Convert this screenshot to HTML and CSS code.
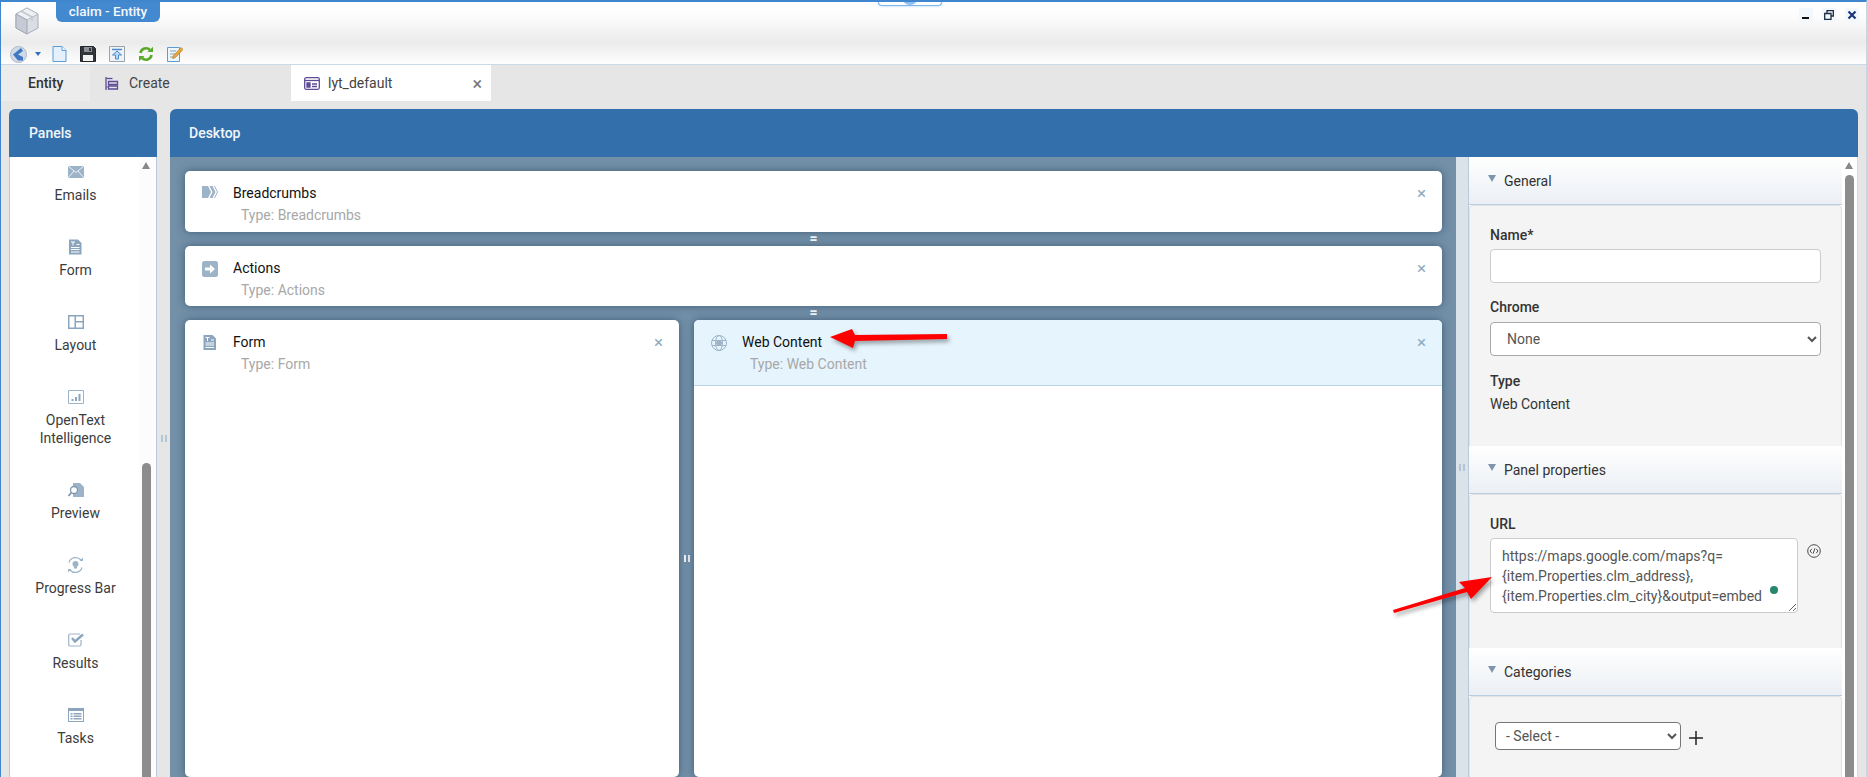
FILE: index.html

```html
<!DOCTYPE html>
<html lang="en">
<head>
  <meta charset="UTF-8" />
  <title>claim - Entity</title>
  <link rel="stylesheet" href="styles.css">
</head>
<body>

<div class="window">
  <div class="dock-tab"><span class="dock-dot"></span></div>

  <header class="titlebar">
    <div class="title-row">
      <svg class="logo" width="24" height="28" viewBox="0 0 24 28">
        <path d="M12 1 23 7v14L12 27 1 21V7z" fill="#d9dde4" stroke="#a9aeb8"/>
        <path d="M1 7l11 6 11-6-11-6z" fill="#eef0f4" stroke="#b5bac4"/>
        <path d="M12 13v14L1 21V7z" fill="#c6cad4" stroke="#a3a8b4"/>
        <path d="M6 4l11 6v4" fill="none" stroke="#c2c6ce" stroke-width="1.5"/>
      </svg>
      <div class="title-tab">claim - Entity</div>
      <div class="win-controls">
        <span class="win-btn"><svg width="10" height="10" viewBox="0 0 10 10"><path d="M1 8h7" stroke="#111" stroke-width="2"/></svg></span>
        <span class="win-btn"><svg width="10" height="10" viewBox="0 0 10 10"><path d="M3 3V.7h6.3V6H7M.7 3.5H7v6H.7z" fill="none" stroke="#1c2a44" stroke-width="1.3"/></svg></span>
        <span class="win-btn"><svg width="10" height="10" viewBox="0 0 10 10"><path d="M1.5 1.5l7 7M8.5 1.5l-7 7" stroke="#1b3578" stroke-width="2.2"/></svg></span>
      </div>
    </div>
    <div class="toolbar">
      <svg class="tool-back" width="17" height="17" viewBox="0 0 17 17">
        <circle cx="8.5" cy="8.5" r="8" fill="#cfd9e8" stroke="#aeb9ca"/>
        <path d="M11 2 3 8.5l5 6h5V11L8 8.500 13 5z" fill="#3f78c2"/>
      </svg>
      <span class="tool-caret"></span>
      <svg class="tool" width="15" height="16" viewBox="0 0 15 16"><path d="M1 .5h9L14 4.500V15.500H1z" fill="#e4f0fb" stroke="#5b9bd8"/><path d="M10 .5v4h4" fill="#fff" stroke="#5b9bd8"/></svg>
      <svg class="tool" width="16" height="16" viewBox="0 0 16 16"><path d="M.5.5h13l2 2v13H.5z" fill="#33363b" stroke="#22252a"/><path d="M4 1h8v5H4z" fill="#8d9096"/><path d="M9 2h2v3H9z" fill="#33363b"/><path d="M3 9h10v6H3z" fill="#f2f2f2"/></svg>
      <svg class="tool" width="16" height="16" viewBox="0 0 16 16"><path d="M.5.500h15v15H.5z" fill="#eef2f6" stroke="#9aa4ae"/><path d="M3 3.500h10" stroke="#4a8ccc" stroke-width="1.500"/><path d="M8 5 3.500 9H6.500v4h3V9h3z" fill="#bcd8f2" stroke="#4a8ccc"/></svg>
      <svg class="tool" width="16" height="16" viewBox="0 0 16 16"><path d="M2.500 7a5.600 5.600 0 0 1 9.500-3" fill="none" stroke="#5aa92a" stroke-width="2.600"/><path d="M9.500 6H15V.8z" fill="#5aa92a"/><path d="M13.500 9a5.600 5.600 0 0 1-9.500 3" fill="none" stroke="#5aa92a" stroke-width="2.600"/><path d="M6.500 10H1v5.200z" fill="#5aa92a"/></svg>
      <svg class="tool" width="16" height="16" viewBox="0 0 16 16"><path d="M.5 1.500h12v14H.5z" fill="#eef6fc" stroke="#5b9bd8"/><path d="M3 5h6M3 8h5M3 11h3" stroke="#8aa0b4"/><path d="M14 1.500 16 3.500 8.500 11.500 5.500 12.500 6.500 9.500z" fill="#e8a93a" stroke="#a9701f" stroke-width=".6"/></svg>
    </div>
  </header>

  <nav class="tabs">
    <div class="tab tab-entity">Entity</div>
    <div class="tab tab-create">
      <svg width="14" height="15" viewBox="0 0 14 15" fill="none" stroke="#5d4b94" stroke-width="1.300"><path d="M1 1v13"/><path d="M1.500 2.500h6"/><path d="M3.500 5.500h9v3h-9z"/><path d="M1.500 11h1"/><path d="M3.500 10h9v3h-9z"/></svg>
      <span>Create</span>
    </div>
    <div class="tab tab-active">
      <svg width="16" height="13" viewBox="0 0 16 13" fill="none" stroke="#5d4b94" stroke-width="1.300"><rect x=".7" y=".7" width="14.600" height="11.600" rx="1.500"/><path d="M1 3.500h14"/><path d="M3 6h3v4H3z" fill="#5d4b94"/><path d="M8 7h5M8 9.500h5"/></svg>
      <span class="tab-name">lyt_default</span>
      <span class="tab-close">×</span>
    </div>
  </nav>

  <main class="workspace">
    <section class="panels">
      <h2 class="pane-head">Panels</h2>
      <div class="panel-list">
        <div class="panel-items">
          <div class="panel-item">
            <svg class="ico" width="16" height="12" viewBox="0 0 16 12"><path d="M0 0h16v12H0z" fill="#9db3c8"/><path d="M0 0l8 6.500L16 0M0 12l6-7M16 12l-6-7" fill="none" stroke="#fff" stroke-width=".8"/></svg>
            <span>Emails</span>
          </div>
          <div class="panel-item">
            <svg class="ico" width="13" height="15" viewBox="0 0 13 15"><path d="M0 0h9l3.500 3.500V15H0z" fill="#8ba5be"/><path d="M2 2.500h4M4 2.500V6M2 8h8.500M2 10h8.500M2 12.500h8.500M7.500 5h3" stroke="#fff"/></svg>
            <span>Form</span>
          </div>
          <div class="panel-item">
            <svg class="ico" width="16" height="14" viewBox="0 0 16 14"><path d="M0 0h16v14H0z" fill="#8ba5be"/><path d="M1.500 1.500h5v11h-5zM8 1.500h6.500V6H8zM8 7.500h6.500v5H8z" fill="#fff"/></svg>
            <span>Layout</span>
          </div>
          <div class="panel-item">
            <svg class="ico" width="16" height="14" viewBox="0 0 16 14"><path d="M.5.500h15v13H.5z" fill="#fff" stroke="#9db3c8"/><path d="M3.500 9h2v2h-2zM7 7h2v4H7zM10.500 4h2v7h-2z" fill="#8ba5be"/></svg>
            <span>OpenText<br>Intelligence</span>
          </div>
          <div class="panel-item">
            <svg class="ico" width="16" height="14" viewBox="0 0 16 14"><path d="M5 0h7l4 4v10H5z" fill="#9db3c8"/><circle cx="6" cy="7" r="3.500" fill="#fff" stroke="#7d97b0" stroke-width="1.300"/><path d="M3.500 9.500.5 13" stroke="#7d97b0" stroke-width="1.800"/></svg>
            <span>Preview</span>
          </div>
          <div class="panel-item">
            <svg class="ico" width="17" height="17" viewBox="0 0 17 17" fill="none" stroke="#9db3c8" stroke-width="1.200"><path d="M2 6a7 7 0 0 1 12-2.500"/><path d="M15 11a7 7 0 0 1-12 2.500"/><path d="M12.500 4.500H16V1zM4.500 12.500H1V16z" fill="#9db3c8" stroke="none"/><circle cx="8.500" cy="7.500" r="3" fill="#9db3c8" stroke="none"/><path d="M7 10h3v2H7z" fill="#9db3c8" stroke="none"/></svg>
            <span>Progress Bar</span>
          </div>
          <div class="panel-item">
            <svg class="ico" width="16" height="14" viewBox="0 0 16 14" fill="none"><path d="M13 7v4.500a1.500 1.500 0 0 1-1.500 1.500H2A1.500 1.500 0 0 1 .7 11.500V2.500A1.500 1.500 0 0 1 2 1h10" stroke="#9db3c8" stroke-width="1.200"/><path d="M4 5l3 3.500L15 1.500" stroke="#8ba5be" stroke-width="2.400"/></svg>
            <span>Results</span>
          </div>
          <div class="panel-item">
            <svg class="ico" width="16" height="14" viewBox="0 0 16 14"><path d="M0 0h16v14H0z" fill="#8ba5be"/><path d="M1 3h14v10H1z" fill="#fff"/><path d="M2.500 5h2v1.500h-2zM2.500 7.500h2V9h-2zM2.500 10h2v1.500h-2zM5.500 5h8v1.500h-8zM5.500 7.500h8V9h-8zM5.500 10h8v1.500h-8z" fill="#8ba5be"/></svg>
            <span>Tasks</span>
          </div>
        </div>
        <div class="scroll scroll-left">
          <span class="scroll-up"></span>
          <span class="scroll-thumb"></span>
        </div>
      </div>
    </section>

    <div class="splitter"><span class="grip"></span></div>

    <section class="desktop">
      <h2 class="pane-head">Desktop</h2>
      <div class="desktop-body">
        <div class="canvas">
          <div class="card card-row">
            <svg class="card-ico" width="16" height="12" viewBox="0 0 16 12"><path d="M0 0h6l3 6-3 6H0z" fill="#9db3c8"/><path d="M7.500 0h3l3 6-3 6h-3l3-6zM12 0h1l3 6-3 6h-1l3-6z" fill="#9db3c8"/></svg>
            <div class="card-text">
              <div class="card-title">Breadcrumbs</div>
              <div class="card-type">Type: Breadcrumbs</div>
            </div>
            <span class="card-close">×</span>
          </div>
          <div class="row-grip">=</div>
          <div class="card card-row">
            <svg class="card-ico" width="16" height="16" viewBox="0 0 16 16"><rect width="16" height="16" rx="2.500" fill="#9db3c8"/><path d="M3 6.500h5V3.500L13 8l-5 4.500v-3H3z" fill="#fff"/></svg>
            <div class="card-text">
              <div class="card-title">Actions</div>
              <div class="card-type">Type: Actions</div>
            </div>
            <span class="card-close">×</span>
          </div>
          <div class="row-grip">=</div>
          <div class="card-columns">
            <div class="card card-form">
              <div class="card-row">
                <svg class="card-ico" width="12" height="15" viewBox="0 0 13 15"><path d="M0 0h9l3.500 3.500V15H0z" fill="#8ba5be"/><path d="M2 2.500h4M4 2.500V6M2 8h8.500M2 10h8.500M2 12.500h8.500M7.500 5h3" stroke="#fff"/></svg>
                <div class="card-text">
                  <div class="card-title">Form</div>
                  <div class="card-type">Type: Form</div>
                </div>
                <span class="card-close">×</span>
              </div>
            </div>
            <div class="col-grip"><span class="grip grip-white"></span></div>
            <div class="card card-web">
              <div class="card-row card-selected">
                <svg class="card-ico" width="16" height="16" viewBox="0 0 16 16" fill="none" stroke="#9db3c8"><circle cx="8" cy="8" r="7.500"/><ellipse cx="8" cy="8" rx="3.500" ry="7.500"/><path d="M1 5.500h14M1 10.500h14"/><circle cx="8" cy="8" r="2.500" fill="#9db3c8"/></svg>
                <div class="card-text">
                  <div class="card-title">Web Content</div>
                  <div class="card-type">Type: Web Content</div>
                </div>
                <span class="card-close">×</span>
              </div>
            </div>
          </div>
        </div>

        <div class="splitter splitter-props"><span class="grip"></span></div>

        <div class="props">
          <div class="props-scroll">
            <div class="acc-head"><span class="acc-arrow"></span>General</div>
            <div class="acc-body acc-general">
              <label class="field-label">Name*</label>
              <input class="text-input" type="text" />
              <label class="field-label label-chrome">Chrome</label>
              <select class="select-wide"><option>None</option></select>
              <div class="field-label label-type">Type</div>
              <div class="field-value">Web Content</div>
            </div>

            <div class="acc-head"><span class="acc-arrow"></span>Panel properties</div>
            <div class="acc-body acc-panel">
              <label class="field-label">URL</label>
              <div class="url-row">
                <div class="url-field">
                  <textarea class="url-input" spellcheck="false">https://maps.google.com/maps?q=
{item.Properties.clm_address},
{item.Properties.clm_city}&amp;output=embed</textarea>
                  <span class="url-dot"></span>
                </div>
                <svg class="url-code" width="16" height="16" viewBox="0 0 16 16" fill="none" stroke="#333"><circle cx="8" cy="8" r="7.200"/><path d="M5.500 5.500 3.500 8l2 2.500M10.500 5.500l2 2.500-2 2.500M9 5l-2 6"/></svg>
              </div>
            </div>

            <div class="acc-head"><span class="acc-arrow"></span>Categories</div>
            <div class="acc-body acc-categories">
              <select class="select-cat"><option>- Select -</option></select>
              <svg class="cat-plus" width="14" height="14" viewBox="0 0 14 14"><path d="M7 0v14M0 7h14" stroke="#222" stroke-width="1.500"/></svg>
            </div>
          </div>
          <div class="scroll scroll-props">
            <span class="scroll-up"></span>
            <span class="scroll-thumb"></span>
          </div>
        </div>
      </div>
    </section>
  </main>

  <!-- red annotation arrows drawn over the screenshot -->
  <svg class="note-arrow arrow-web" width="124" height="24" viewBox="0 0 124 24"><path d="M2 11 24 3l3 6 92-1v5l-92 2-2 7z" fill="#f00"/></svg>
  <svg class="note-arrow arrow-url" width="108" height="44" viewBox="0 0 108 44"><path d="M101 2 80 24l-4-7L3 38l-1-3 72-22-6-6z" fill="#f00"/></svg>
</div>

</body>
</html>
```

FILE: styles.css

```css
html, body { height: 100%; }
body { margin: 0; font-family: Roboto, "Liberation Sans", sans-serif; font-size: 14px; color: #333; overflow: hidden; background: #e6e6e6; }

.window { position: relative; height: 100vh; box-sizing: border-box; display: flex; flex-direction: column; overflow: hidden;
          border-top: 2px solid #3f86cf; border-left: 1px solid #3f86cf; border-right: 1px solid #c9d6e2; }

.dock-tab { position: absolute; top: -2px; left: 877px; width: 62px; height: 5px; background: #fff; border: 1px solid #7db6ee; border-top: none;
            border-radius: 0 0 4px 4px; box-shadow: 0 0 3px #a9d0f5; overflow: hidden; z-index: 3; }
.dock-dot { display: block; width: 16px; height: 16px; margin: -11px auto 0; border-radius: 50%; background: #8fbff0; }

/* title bar */
.titlebar { height: 63px; flex: none; box-sizing: border-box; border-bottom: 1px solid #c9d9e8;
            background: linear-gradient(#fff 0, #fcfcfc 15px, #ebebeb 40px, #fbfbfb 58px, #fff 63px); }
.title-row { height: 41px; display: flex; align-items: flex-start; }
.logo { margin: 5px 17px 0 14px; }
.title-tab { width: 104px; height: 20px; line-height: 19px; text-align: center; background: #4389cf; color: #f4f8fd; font-weight: 500; font-size: 13.500px;
             border-radius: 0 0 6px 6px; }
.win-controls { margin-left: auto; margin-right: 7px; margin-top: 6px; display: flex; gap: 9px; }
.win-btn { width: 14px; height: 14px; background: #f3f8fc; display: flex; align-items: center; justify-content: center; }
.toolbar { height: 22px; display: flex; align-items: center; padding-left: 9px; }
.tool-caret { width: 0; height: 0; margin: 0 11px 0 8px; border-left: 3.500px solid transparent; border-right: 3.500px solid transparent; border-top: 4px solid #2f6fc0; }
.tool { margin-right: 13px; }

/* tabs */
.tabs { height: 36px; flex: none; display: flex; background: #e6e6e6; }
.tab { height: 36px; display: flex; align-items: center; box-sizing: border-box; color: #444; }
.tab-entity { width: 89px; background: #ececec; padding-left: 27px; font-weight: 500; color: #333; }
.tab-create { width: 201px; padding-left: 15px; gap: 10px; }
.tab-active { width: 200px; background: #fff; padding-left: 13px; }
.tab-name { margin-left: 8px; }
.tab-close { margin-left: auto; margin-right: 9px; font-size: 18px; color: #777; }

/* main area */
.workspace { flex: 1; min-height: 0; display: flex; padding: 8px 8px 0; }
.pane-head { margin: 0; height: 48px; line-height: 48px; flex: none; background: #3370ab; color: #f2f6fb; font-size: 14px; font-weight: 500; }

.panels { width: 148px; flex: none; display: flex; flex-direction: column; }
.panels .pane-head { padding-left: 20px; border-radius: 6px 6px 0 0; }
.panel-list { flex: 1; min-height: 0; display: flex; background: #fff; border-left: 1px solid #b8c9da; border-right: 1px solid #b8c9da; overflow: hidden; }
.panel-items { flex: 1; padding-top: 5px; }
.panel-item { display: flex; flex-direction: column; align-items: center; text-align: center; line-height: 18px; color: #3c3c3c; margin-bottom: 33px; padding-left: 2px; }
.panel-item .ico { height: 20px; margin-bottom: 4px; }

.splitter { width: 13px; flex: none; background: #e6e6e6; display: flex; align-items: center; justify-content: center; padding-bottom: 10px; box-sizing: border-box; }
.splitter-props { background: #dbe3ea; border-right: 1px solid #b8c9da; padding-bottom: 0; }
.grip { display: block; width: 2px; height: 7px; border-left: 2px solid #b3c6d8; border-right: 2px solid #b3c6d8; }
.grip-white { border-color: #e8eef3; }

.scroll { width: 16px; flex: none; box-sizing: border-box; padding: 5px 3px 0; display: flex; flex-direction: column; background: #fcfcfc; }
.scroll-up { flex: none; width: 0; height: 0; border-left: 4.500px solid transparent; border-right: 4.500px solid transparent; border-bottom: 7px solid #888; }
.scroll-thumb { flex: 1; width: 9px; background: #8c8c8c; border-radius: 5px 5px 0 0; }
.scroll-left { padding-top: 5px; margin-right: 1px; }
.scroll-left .scroll-thumb { margin-top: 294px; }
.scroll-props .scroll-thumb { margin-top: 6px; }

.desktop { flex: 1; min-width: 0; display: flex; flex-direction: column; }
.desktop > .pane-head { padding-left: 19px; border-radius: 6px 6px 0 0; }
.desktop-body { flex: 1; min-height: 0; display: flex; }

/* canvas with the placed panels */
.canvas { flex: 1; min-width: 0; display: flex; flex-direction: column; box-sizing: border-box; padding: 14px 14px 0 15px; background: #7390a8; }
.card { background: #fff; border-radius: 5px; box-shadow: 0 0 9px rgba(38, 66, 92, 0.65); }
.card-row { display: flex; align-items: flex-start; position: relative; height: 60px; padding: 14px 16px 0 17px; box-sizing: border-box; }
.canvas > .card-row:first-child { height: 61px; }
.card-ico { width: 16px; margin-top: 1px; flex: none; }
.card-text { margin-left: 15px; }
.card-title { line-height: 17px; color: #111; }
.card-type { line-height: 17px; margin: 5px 0 0 8px; color: #a8a8a8; }
.card-close { margin-left: auto; font-size: 17px; line-height: 17px; color: #8eaabf; }
.row-grip { height: 14px; line-height: 12px; text-align: center; color: #fff; font-size: 14px; font-weight: 700; }
.card-columns { flex: 1; min-height: 0; display: flex; }
.card-form { width: 494px; flex: none; }
.card-web { flex: 1; min-width: 0; overflow: hidden; }
.card-form .card-row { height: 66px; }
.card-selected { height: 66px; background: #e5f4fd; border-bottom: 1px solid #b9d6e6; }
.col-grip { width: 15px; flex: none; display: flex; align-items: center; justify-content: center; padding-top: 20px; }

/* properties column */
.props { width: 389px; flex: none; display: flex; background: #fff; }
.props-scroll { flex: 1; min-width: 0; overflow: hidden; }
.scroll-props { border-right: 1px solid #d9d9d9; background: #fff; }
.acc-head { height: 48px; line-height: 46px; box-sizing: border-box; padding-left: 19px; display: flex; align-items: center; color: #333;
            background: linear-gradient(#fff, #ebeff4); border-bottom: 1px solid #b8cfe2; }
.acc-arrow { width: 0; height: 0; margin: -5px 8px 0 0; border-left: 4.500px solid transparent; border-right: 4.500px solid transparent; border-top: 7px solid #7d96ae; }
.acc-body { box-sizing: border-box; background: #f4f4f4; border: 1px solid #e3e3e3; border-bottom: none; border-radius: 4px 4px 0 0; padding: 20px 20px 0; }
.acc-general { height: 241px; }
.acc-panel { height: 154px; }
.acc-categories { height: 90px; padding: 25px 0 0 25px; display: flex; align-items: flex-start; }
.field-label { display: block; font-weight: 500; line-height: 18px; color: #333; }
.label-chrome { margin-top: 15px; }
.label-type { margin-top: 16px; }
.field-value { margin-top: 5px; line-height: 18px; color: #333; }
.text-input { display: block; width: 100%; height: 34px; margin-top: 5px; box-sizing: border-box; background: #fff; border: 1px solid #ccc; border-radius: 4px; }
.select-wide { display: block; width: 100%; height: 34px; margin-top: 6px; box-sizing: border-box; padding-left: 12px; font: 14px Roboto, sans-serif; color: #555; background: #fff; border: 1px solid #aaa; border-radius: 4px; }
.url-row { display: flex; align-items: flex-start; margin-top: 5px; }
.url-field { position: relative; width: 308px; height: 75px; flex: none; }
.url-input { display: block; width: 100%; height: 100%; box-sizing: border-box; padding: 7px 11px; font: 14px/20px Roboto, sans-serif; color: #555; background: #fff; border: 1px solid #ccc; border-radius: 4px; overflow: hidden; white-space: pre; }
.url-dot { position: absolute; left: 280px; top: 48px; width: 8px; height: 8px; border-radius: 50%; background: #26876f; }
.url-code { margin: 5px 0 0 9px; }
.select-cat { width: 186px; height: 28px; box-sizing: border-box; padding-left: 6px; font: 14px Roboto, sans-serif; color: #555; background: #fff; border: 1px solid #767676; border-radius: 4px; }
.cat-plus { margin: 9px 0 0 8px; }

/* annotations */
.note-arrow { position: absolute; filter: drop-shadow(2px 3px 2px rgba(0, 0, 0, 0.35)); z-index: 5; overflow: visible; }
.arrow-web { left: 827px; top: 324px; }
.arrow-url { left: 1390px; top: 573px; }
```
